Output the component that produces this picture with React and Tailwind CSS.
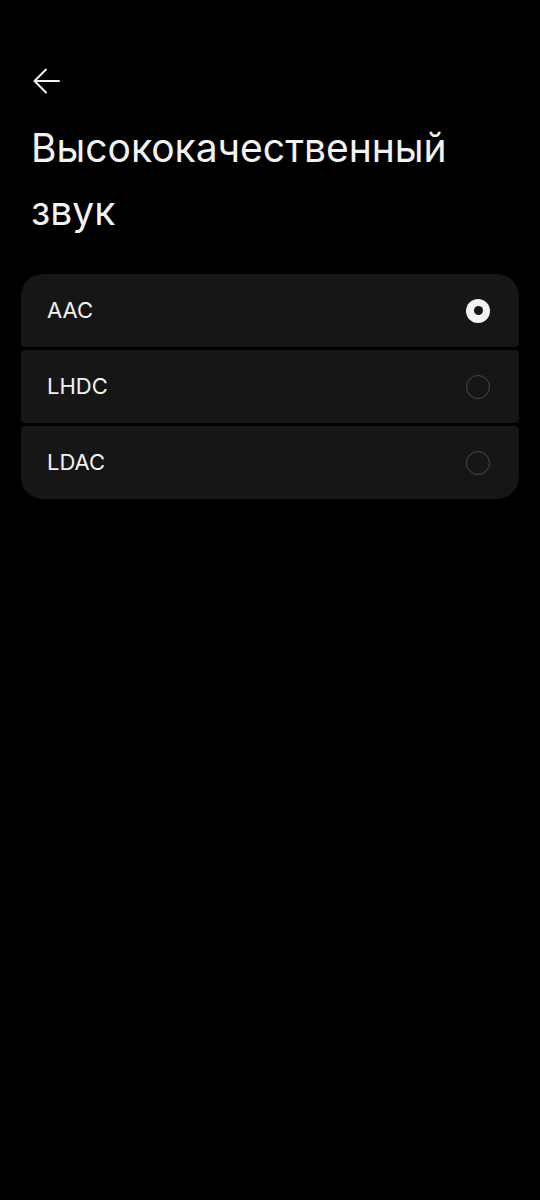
import { useState } from 'react'

const codecs = ['AAC', 'LHDC', 'LDAC']

function Radio({ checked }){
  if(checked){
    return (
      <span className="w-6 h-6 rounded-full bg-[#f2f2f2] flex items-center justify-center">
        <span className="w-[9px] h-[9px] rounded-full bg-[#161616]" />
      </span>
    )
  }
  return <span className="w-6 h-6 rounded-full border-[1.5px] border-[#4a4a4a]" />
}

export default function App(){
  const [selected, setSelected] = useState('AAC')

  return (
    <div className="min-h-[1200px] bg-black text-white font-['Inter','Noto_Sans',sans-serif]">
      <div className="pt-[68px] px-[33px]">
        <button className="block w-[27px] h-[26px]">
          <svg viewBox="0 0 27 26" width="27" height="26" fill="none" stroke="#f2f2f2" strokeWidth="2" strokeLinecap="round" strokeLinejoin="round">
            <path d="M26 13H2M13 1.5L1.5 13L13 24.5" />
          </svg>
        </button>
      </div>
      <h1 className="px-[31px] mt-[22px] text-[39px] leading-[63px] font-normal text-[#f2f2f2]">
        Высококачественный<br />звук
      </h1>
      <div className="mx-[21px] mt-[32px] flex flex-col gap-[3px]">
        {codecs.map((c, i) => (
          <button
            key={c}
            onClick={() => setSelected(c)}
            className={
              'h-[73px] bg-[#161616] flex items-center justify-between pl-[26px] pr-[29px] text-left ' +
              (i === 0 ? 'rounded-t-[22px] rounded-b-[4px]' : i === codecs.length - 1 ? 'rounded-b-[22px] rounded-t-[4px]' : 'rounded-[4px]')
            }
          >
            <span className="text-[22px] text-[#f2f2f2]">{c}</span>
            <Radio checked={selected === c} />
          </button>
        ))}
      </div>
    </div>
  )
}
